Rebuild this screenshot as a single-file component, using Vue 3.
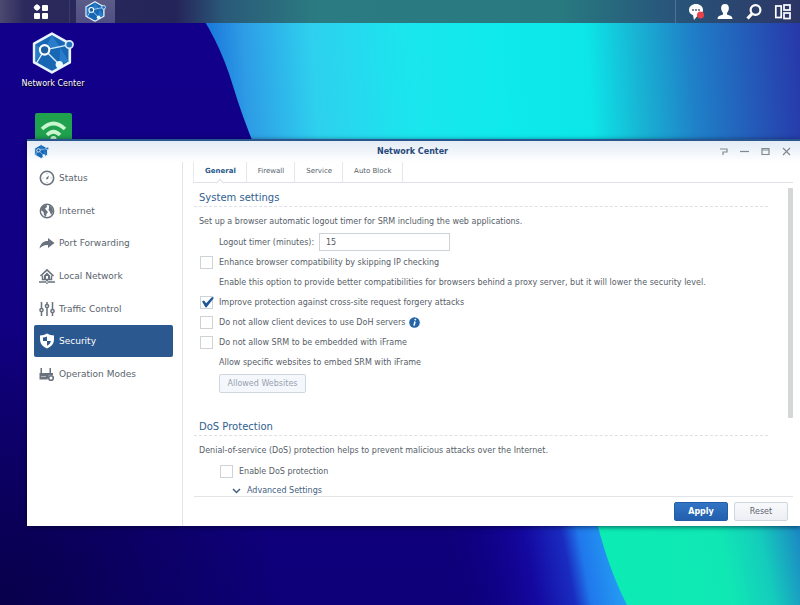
<script setup>
import { ref } from 'vue'

const navItems = [
  { id: 'status', label: 'Status' },
  { id: 'internet', label: 'Internet' },
  { id: 'port', label: 'Port Forwarding' },
  { id: 'local', label: 'Local Network' },
  { id: 'traffic', label: 'Traffic Control' },
  { id: 'security', label: 'Security' },
  { id: 'modes', label: 'Operation Modes' },
]
const tabs = ['General', 'Firewall', 'Service', 'Auto Block']

const activeNav = ref('security')
const activeTab = ref('General')
const timer = ref('15')
const skipIp = ref(false)
const csrf = ref(true)
const doh = ref(false)
const iframe = ref(false)
const dos = ref(false)
</script>

<template>
  <div class="desktop">
    <svg class="wallpaper" viewBox="0 0 800 605" preserveAspectRatio="none" aria-hidden="true">
      <defs>
        <linearGradient id="base" x1="0" y1="0" x2="0" y2="1">
          <stop offset="0" stop-color="#12008c" />
          <stop offset="0.8" stop-color="#10007c" />
          <stop offset="1" stop-color="#0d0078" />
        </linearGradient>
        <radialGradient id="corner" gradientUnits="userSpaceOnUse" cx="0" cy="605" r="280">
          <stop offset="0" stop-color="#08004a" />
          <stop offset="1" stop-color="#08004a" stop-opacity="0" />
        </radialGradient>
        <linearGradient id="sky" gradientUnits="userSpaceOnUse" x1="205" y1="105" x2="815" y2="65">
          <stop offset="0" stop-color="#1670d8" />
          <stop offset="0.07" stop-color="#2e9ce6" />
          <stop offset="0.18" stop-color="#2ed0ee" />
          <stop offset="0.34" stop-color="#1ae6ee" />
          <stop offset="0.5" stop-color="#0eeaec" />
          <stop offset="0.63" stop-color="#0ce6e8" />
          <stop offset="0.71" stop-color="#18b4d4" />
          <stop offset="0.8" stop-color="#1f80c8" />
          <stop offset="0.9" stop-color="#2458b8" />
          <stop offset="1" stop-color="#2830a4" />
        </linearGradient>
        <linearGradient id="glow" gradientUnits="userSpaceOnUse" x1="460" y1="590" x2="620" y2="560">
          <stop offset="0" stop-color="#10008a" stop-opacity="0" />
          <stop offset="0.45" stop-color="#1408a0" />
          <stop offset="0.68" stop-color="#1a2cc0" />
          <stop offset="0.78" stop-color="#2078ec" />
          <stop offset="1" stop-color="#24a0f4" />
        </linearGradient>
        <linearGradient id="mint" gradientUnits="userSpaceOnUse" x1="600" y1="590" x2="805" y2="545">
          <stop offset="0" stop-color="#0cecb4" />
          <stop offset="0.6" stop-color="#10e8b4" />
          <stop offset="0.8" stop-color="#14ccbc" />
          <stop offset="1" stop-color="#1c84c4" />
        </linearGradient>
      </defs>
      <rect width="800" height="605" fill="url(#base)" />
      <rect width="400" height="605" fill="url(#corner)" />
      <path d="M190 0 Q218 36 233 86 Q242 116 256 150 L800 150 L800 0Z" fill="url(#sky)" />
      <rect x="440" y="500" width="360" height="105" fill="url(#glow)" />
      <path d="M592 500 Q604 560 627 605 L800 605 L800 500Z" fill="url(#mint)" />
    </svg>

    <svg class="defs" width="0" height="0" aria-hidden="true">
      <defs>
        <symbol id="network" viewBox="0 0 40 40">
          <path d="M19 1.500 L36 11 V29 L19 38.500 L2 29 V11Z" fill="#1767b5" stroke="#e8f3fc" stroke-width="2.500" stroke-linejoin="round" />
          <path d="M19 3 L27 15 L12 17Z M12 17 L3 12 V28Z M27 15 L35 28 L26 30Z" fill="#3186d2" opacity=".7" />
          <path d="M12 17 L36 12 M12 17 L26 31 M12 17 L4 30" fill="none" stroke="#d9edfc" stroke-width="1.300" />
          <circle cx="12" cy="17" r="4.500" fill="#1d5f9f" stroke="#fff" stroke-width="2" />
          <circle cx="35.500" cy="12" r="3.600" fill="#2571bd" stroke="#d9edfc" stroke-width="1.600" />
          <circle cx="26" cy="31" r="3.500" fill="#e9faff" />
        </symbol>
      </defs>
    </svg>

    <header class="taskbar">
      <button class="task menu" aria-label="Main menu">
        <svg width="16" height="16" viewBox="0 0 16 16" fill="#fff"><path d="M4 0 L7.500 3.500 L4 7 L.5 3.500Z" /><circle cx="4" cy="3.500" r="2.800" /><rect x="9" y="1" width="6" height="6" rx="1" /><rect x="1" y="9" width="6" height="6" rx="1" /><rect x="9" y="9" width="6" height="6" rx="1" /></svg>
      </button>
      <button class="task app" aria-label="Open application">
        <svg width="21" height="21"><use href="#network" /></svg>
      </button>
      <div class="tray">
        <button aria-label="Notifications">
          <svg width="18" height="18" viewBox="0 0 18 18"><path d="M9 1 C13 1 16 3.500 16 7 S13 12.500 10.500 12.700 L7 17 L6 12.300 C3.500 11.300 2 9.300 2 7 C2 3.500 5 1 9 1Z" fill="#fff" /><g fill="#555b75"><circle cx="6" cy="7" r="1" /><circle cx="9" cy="7" r="1" /><circle cx="12" cy="7" r="1" /></g><circle cx="13.500" cy="12" r="3.500" fill="#ea4248" /></svg>
        </button>
        <button aria-label="Account">
          <svg width="18" height="18" viewBox="0 0 18 18"><path d="M9 1 C11.500 1 13 2.500 12.900 5.300 C12.800 8 11.500 9 11 10 V11.500 L15 13 Q16.500 13.800 16.500 16 H1.500 Q1.500 13.800 3 13 L7 11.500 V10 C6.500 9 5.200 8 5.100 5.300 C5 2.500 6.500 1 9 1Z" fill="#fff" /></svg>
        </button>
        <button aria-label="Search">
          <svg width="18" height="18" viewBox="0 0 18 18" fill="none" stroke="#fff"><circle cx="10.500" cy="7" r="4.900" stroke-width="2.200" /><path d="M6.800 11 L2.500 15.500" stroke-width="3.200" /></svg>
        </button>
        <button aria-label="Widgets">
          <svg width="18" height="18" viewBox="0 0 18 18" fill="none" stroke="#fff" stroke-width="1.700"><rect x="1.800" y="3" width="5.400" height="11.500" /><rect x="10" y="2" width="6" height="5" /><rect x="10" y="10" width="6" height="5.500" /></svg>
        </button>
      </div>
    </header>

    <nav class="shortcuts" aria-label="Desktop">
      <a href="#network-center">
        <svg width="42" height="42"><use href="#network" /></svg>
        <span>Network Center</span>
      </a>
      <a href="#wifi" aria-label="Wi-Fi">
        <svg width="37" height="37" viewBox="0 0 37 37"><rect width="37" height="37" rx="2" fill="#1fa14e" /><g fill="none" stroke="#c9f5cf" stroke-width="3.600"><path d="M7 16 Q18.500 5 30 16" /><path d="M12 22 Q18.500 15.500 25 22" /></g><circle cx="18.500" cy="26" r="3" fill="#c9f5cf" /></svg>
      </a>
    </nav>

    <main class="window">
      <div class="titlebar">
        <svg class="title-icon" width="15" height="15"><use href="#network" /></svg>
        <h1>Network Center</h1>
        <div class="controls">
          <button aria-label="Help"><svg width="9" height="9" viewBox="0 0 9 9"><path d="M1 2 H8 V5 H4 V8" /></svg></button>
          <button aria-label="Minimize"><svg width="9" height="9" viewBox="0 0 9 9"><path d="M0 4.500 H9" /></svg></button>
          <button aria-label="Maximize"><svg width="9" height="9" viewBox="0 0 9 9"><path d="M1 1.500 H8 V7.500 H1Z M1 3 H8" /></svg></button>
          <button aria-label="Close"><svg width="9" height="9" viewBox="0 0 9 9"><path d="M1 1 L8 8 M8 1 L1 8" /></svg></button>
        </div>
      </div>

      <div class="body">
        <nav class="sidebar" aria-label="Sections">
          <button v-for="item in navItems" :key="item.id" :class="{ active: activeNav === item.id }" @click="activeNav = item.id">
            <svg width="16" height="16" viewBox="0 0 16 16" aria-hidden="true">
              <g v-if="item.id === 'status'" fill="none" stroke="currentColor">
                <circle cx="8" cy="8" r="6.700" stroke-width="1.600" />
                <path d="M8 3 V4 M3.500 8 H4.500 M11.500 8 H12.500 M8 12 V13" stroke-width=".6" />
                <path d="M10 5.500 L9 9 L7 9.500 L7.500 7.500Z" fill="currentColor" stroke="none" />
              </g>
              <g v-else-if="item.id === 'internet'">
                <circle cx="8" cy="8" r="6.700" fill="none" stroke="currentColor" stroke-width="1.400" />
                <path d="M3 3.500 L7.500 1.500 L8 4 L6 5.500 L7.500 7.500 L9 9 L7.500 11 L7 14 L5 12 L4.500 9 L1.500 7Z M10 2 L13.500 5 L14 9 L12 12 L11 9 L9.500 7 L10 5Z" fill="currentColor" />
              </g>
              <path v-else-if="item.id === 'port'" d="M9 3 L15.500 8 L9 13 V10 C5 9.800 3 11 .5 13.500 C1.500 8.500 4 6 9 6Z" fill="currentColor" />
              <g v-else-if="item.id === 'local'" fill="none" stroke="currentColor">
                <path d="M1.500 8 L8 1.800 L14.500 8" stroke-width="1.600" />
                <path d="M3.500 7.500 V11.500 H12.500 V7.500" stroke-width="1.500" />
                <path d="M8 4.500 L11 7.500 V11 H9 V8 H7 V11 H5 V7.500Z" fill="currentColor" stroke="none" />
                <path d="M0 14 H6 M10 14 H16 M8 11 V13" stroke-width="1.300" />
                <circle cx="8" cy="14" r="1.400" />
              </g>
              <g v-else-if="item.id === 'traffic'" fill="none" stroke="currentColor" stroke-width="1.500">
                <path d="M2.500 1 V7 M2.500 11 V15 M8 1 V3 M8 7 V15 M13.500 1 V8 M13.500 12 V15" />
                <circle cx="2.500" cy="9" r="1.600" /><circle cx="8" cy="5" r="1.600" /><circle cx="13.500" cy="10" r="1.600" />
              </g>
              <g v-else-if="item.id === 'security'">
                <path d="M8 .5 Q11 2.500 15 2.500 V7 Q14.500 13 8 15.500 Q1.500 13 1 7 V2.500 Q5 2.500 8 .5Z" fill="currentColor" />
                <path d="M8 3.500 V8 H4 V4.500 Q6 4.500 8 3.500Z M8 8 H12 Q11.500 11 8 12.700Z" fill="#2b588e" />
              </g>
              <g v-else>
                <path d="M1.500 2 H3 V7 H10.500 V2 H12 V7 H14 V9 H10 L8.500 13.500 H.5 V7 H1.500Z" fill="currentColor" />
                <path d="M2.500 10.500 H7" stroke="#fff" stroke-dasharray="1 1" />
                <circle cx="12" cy="12" r="2.300" fill="#fff" stroke="currentColor" stroke-width="1.600" />
              </g>
            </svg>
            <span>{{ item.label }}</span>
          </button>
        </nav>

        <section class="content">
          <div class="tabs" role="tablist">
            <button v-for="tab in tabs" :key="tab" role="tab" :aria-selected="activeTab === tab" :class="{ active: activeTab === tab }" @click="activeTab = tab">{{ tab }}</button>
          </div>

          <div class="scroller">
            <form class="pane" @submit.prevent>
              <h2>System settings</h2>
              <p>Set up a browser automatic logout timer for SRM including the web applications.</p>
              <div class="row indent">
                <label class="field-label" for="timer">Logout timer (minutes):</label>
                <input id="timer" v-model="timer" class="text" type="text" />
              </div>
              <div class="row"><input id="skip" v-model="skipIp" type="checkbox" /><label for="skip">Enhance browser compatibility by skipping IP checking</label></div>
              <div class="row indent"><span>Enable this option to provide better compatibilities for browsers behind a proxy server, but it will lower the security level.</span></div>
              <div class="row"><input id="csrf" v-model="csrf" type="checkbox" /><label for="csrf">Improve protection against cross-site request forgery attacks</label></div>
              <div class="row">
                <input id="doh" v-model="doh" type="checkbox" /><label for="doh">Do not allow client devices to use DoH servers</label>
                <svg class="info" width="11" height="11" viewBox="0 0 11 11" role="img" aria-label="Information"><circle cx="5.500" cy="5.500" r="5.300" fill="#2565a8" /><path d="M6 4.500 L5 8.700" stroke="#fff" stroke-width="1.500" /><circle cx="6.300" cy="2.600" r=".9" fill="#fff" /></svg>
              </div>
              <div class="row"><input id="frame" v-model="iframe" type="checkbox" /><label for="frame">Do not allow SRM to be embedded with iFrame</label></div>
              <div class="row indent"><span>Allow specific websites to embed SRM with iFrame</span></div>
              <div class="row indent tall"><button class="btn allowed" type="button" disabled>Allowed Websites</button></div>

              <h2 class="second">DoS Protection</h2>
              <p>Denial-of-service (DoS) protection helps to prevent malicious attacks over the Internet.</p>
              <div class="row nested"><input id="dos" v-model="dos" type="checkbox" /><label for="dos">Enable DoS protection</label></div>
              <button class="advanced" type="button">
                <svg width="9" height="6" viewBox="0 0 9 6" fill="none" stroke="#44617f" stroke-width="1.500"><path d="M1 1 L4.500 4.500 L8 1" /></svg>
                Advanced Settings
              </button>
            </form>
            <div class="scrollbar"><div class="thumb"></div></div>
          </div>

          <footer>
            <button class="btn primary" type="button">Apply</button>
            <button class="btn" type="button">Reset</button>
          </footer>
        </section>
      </div>
    </main>
  </div>
</template>

<style>
body { margin: 0; }
</style>

<style scoped>
.desktop { position: relative; min-height: 100vh; overflow: hidden; font: 8px/12px "DejaVu Sans", Verdana, sans-serif; color: #565e68; }
.wallpaper { position: absolute; inset: 0; width: 100%; height: 100%; }
.defs { position: absolute; }
button { font: inherit; color: inherit; background: none; border: 0; padding: 0; margin: 0; }
svg { display: block; flex: none; }

.taskbar { position: relative; display: flex; height: 23px; background: linear-gradient(90deg, #4c4a70 0, #2c2a5c 3%, #25245a 22%, #2a5a78 28%, #2b7c82 40%, #287a80 70%, #285a7c 82%, #2c3565 100%); }
.task { display: flex; align-items: center; justify-content: center; }
.menu { width: 70px; padding-left: 12px; box-sizing: border-box; border-right: 1px solid #3c3a68; }
.app { width: 39px; margin-left: 6px; background: linear-gradient(#5c5c88, #504f84); }
.tray { display: flex; align-items: center; gap: 11px; margin-left: auto; padding: 0 8px 0 11px; border-left: 1px solid #4f7291; }

.shortcuts { position: relative; display: flex; flex-direction: column; align-items: center; width: 106px; padding-top: 9px; gap: 23px; }
.shortcuts a { display: flex; flex-direction: column; align-items: center; gap: 4px; color: #fff; text-decoration: none; text-shadow: 0 1px 1px #000; }

.window { position: absolute; top: 139px; left: 27px; right: 0; display: flex; flex-direction: column; background: #fff; border-top: 2px solid #28578f; box-shadow: 0 1px 5px rgba(0, 0, 30, .6); }
.titlebar { display: grid; grid-template-columns: 1fr auto 1fr; align-items: center; height: 21px; padding: 0 9px 0 7px; background: linear-gradient(#e3ebf5, #fff); }
h1 { margin: 0; font-size: 8px; font-weight: 700; color: #27497a; }
.controls { display: flex; justify-content: flex-end; gap: 12px; }
.controls svg { fill: none; stroke: #7f8994; stroke-width: 1.200; }

.body { display: flex; }
.sidebar { display: grid; grid-template-rows: repeat(7, 1fr); align-self: flex-start; flex: none; box-sizing: border-box; width: 155px; height: 228px; padding: 0 9px 0 7px; }
.sidebar button { display: flex; align-items: center; gap: 4px; padding-left: 5px; font-size: 9px; color: #5a636e; border-radius: 2px; }
.sidebar svg { color: #69727d; }
.sidebar .active, .sidebar .active svg { color: #fff; }
.sidebar .active { background: #2b588e; }

.content { flex: 1; min-width: 0; padding: 0 7px 0 11px; border-left: 1px solid #e2e6ea; }
.tabs { display: flex; height: 20px; margin-left: -1px; border-bottom: 1px solid #dde1e5; border-left: 1px solid #e8ebee; }
.tabs button { position: relative; padding: 0 10px 3px 11px; font-size: 7px; border-right: 1px solid #e4e8eb; }
.tabs .active { font-weight: 700; color: #27578a; }
.tabs .active::after { content: ""; position: absolute; bottom: -4px; left: 50%; width: 5px; height: 5px; margin-left: -3px; background: #fff; border: solid #dde1e5; border-width: 1px 0 0 1px; transform: rotate(45deg); }

.scroller { display: flex; height: 313px; overflow: hidden; }
.pane { flex: 1; min-width: 0; padding-top: 8px; }
h2 { margin: 0 0 9px; padding: 0 5px 1px; font-size: 10px; line-height: 14px; font-weight: 400; color: #30608f; border-bottom: 1px dashed #dde1e5; }
.second { margin-top: 25px; }
p { margin: 0 0 4px; padding-left: 5px; }
.row { display: flex; align-items: center; gap: 6px; height: 20px; padding-left: 6px; white-space: nowrap; }
.row label, .row span { padding-top: 1px; }
.indent { padding-left: 25px; }
.nested { padding-left: 26px; }
.tall { height: 23px; }
input[type="checkbox"] { appearance: none; position: relative; flex: none; width: 13px; height: 13px; box-sizing: border-box; margin: 0; background: #fff; border: 1px solid #ced3d8; }
input[type="checkbox"]:checked::before { content: ""; position: absolute; top: 0; left: 0; width: 13px; height: 11px; background: #1e5794; clip-path: polygon(8% 45%, 23% 36%, 40% 62%, 85% 5%, 100% 12%, 42% 100%, 34% 98%); }
.field-label { flex: none; width: 94px; }
.text { width: 131px; height: 18px; box-sizing: border-box; margin: 0; padding: 0 6px; font: inherit; color: #505860; background: #fff; border: 1px solid #ced3d8; }
.info { margin-left: -2px; }
.btn { width: 54px; height: 19px; box-sizing: border-box; border: 1px solid #d0d6de; border-radius: 2px; background: linear-gradient(#f8f9fb, #eceff4); color: #5a636e; }
.allowed { width: 87px; color: #98a2b2; background: #f4f7fb; }
.primary { font-weight: 700; color: #fff; background: linear-gradient(#3275c4, #235fae); border-color: #235da8; }
.advanced { display: flex; align-items: center; gap: 6px; height: 20px; padding-left: 38px; color: #44617f; }
.scrollbar { flex: none; width: 5px; margin-left: 20px; padding-top: 5px; }
.thumb { height: 230px; background: #d4d6d8; border-radius: 1px; }
footer { display: flex; justify-content: flex-end; gap: 6px; padding: 5px 5px 5px 0; border-top: 1px solid #e2e5e8; }
</style>
